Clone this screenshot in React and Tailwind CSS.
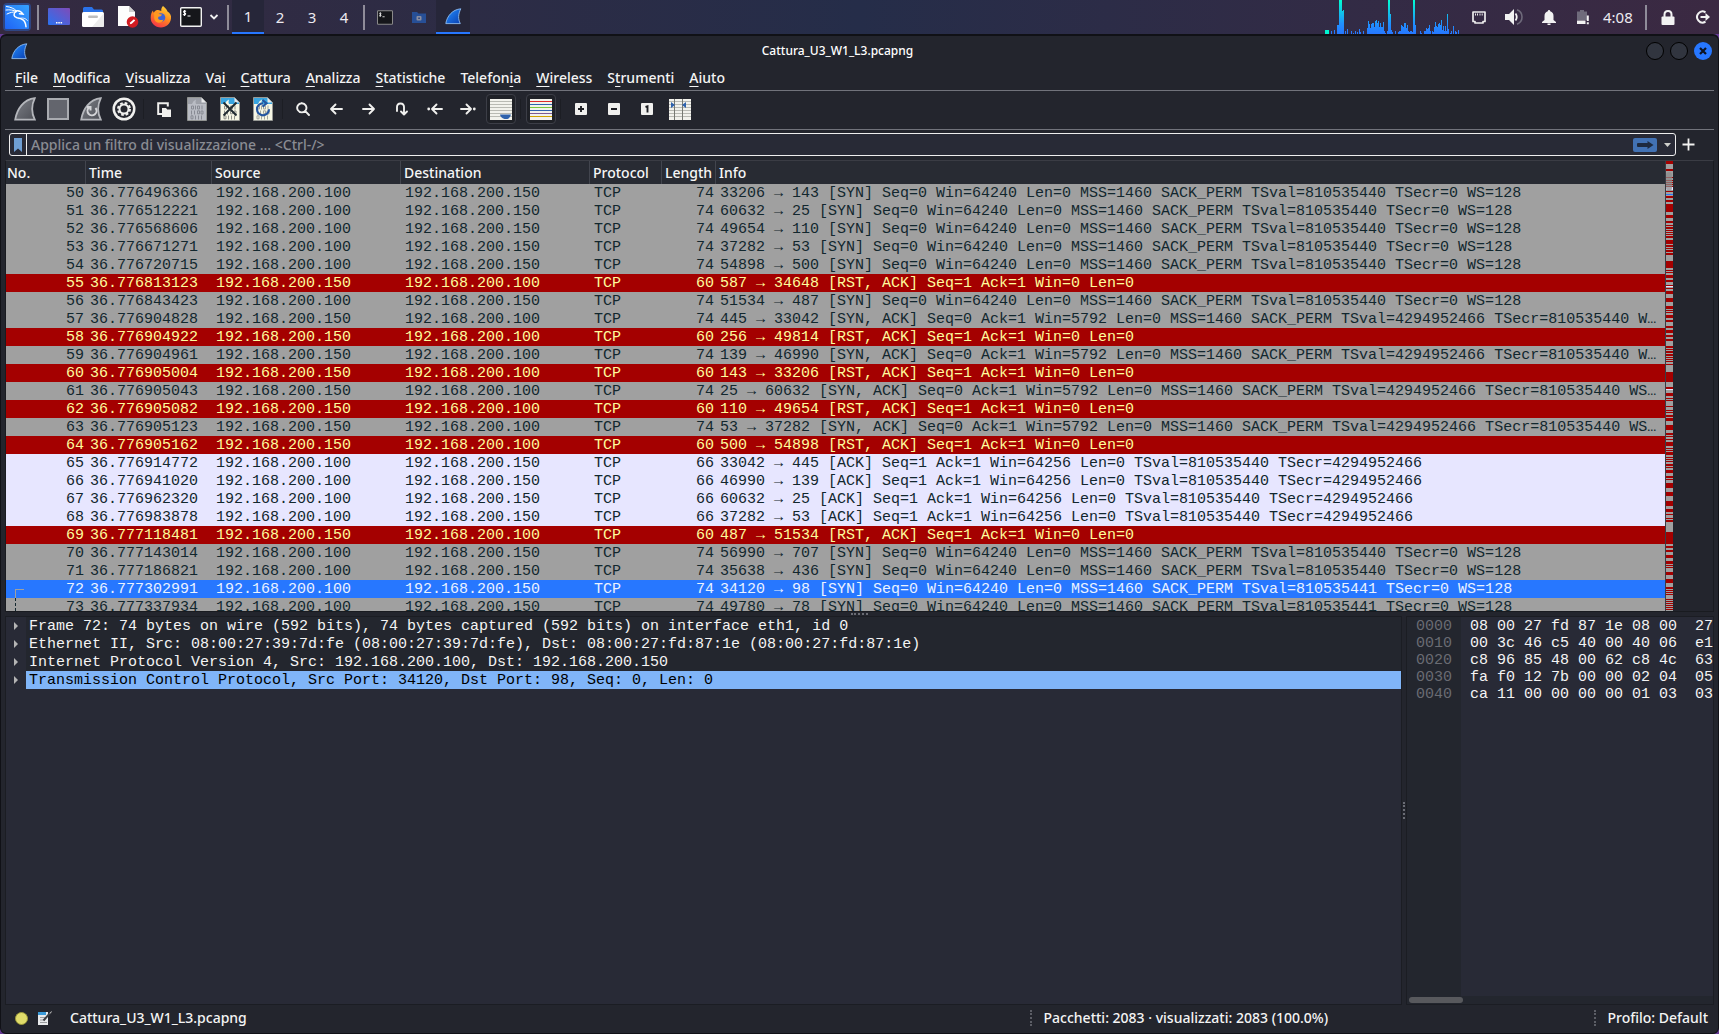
import React from "react";

const S = "192.168.200.100";
const D = "192.168.200.150";
const syn = (p, t = "810535440") => `${p} [SYN] Seq=0 Win=64240 Len=0 MSS=1460 SACK_PERM TSval=${t} TSecr=0 WS=128`;
const rst = (p) => `${p} [RST, ACK] Seq=1 Ack=1 Win=0 Len=0`;
const synAck = (p, end) => `${p} [SYN, ACK] Seq=0 Ack=1 Win=5792 Len=0 MSS=1460 SACK_PERM TSval=4294952466 TSecr=810535440 ${end}`;
const ack = (p) => `${p} [ACK] Seq=1 Ack=1 Win=64256 Len=0 TSval=810535440 TSecr=4294952466`;

const packets = [
  [50, "36.776496366", "gray", 74, syn("33206 → 143")],
  [51, "36.776512221", "gray", 74, syn("60632 → 25")],
  [52, "36.776568606", "gray", 74, syn("49654 → 110")],
  [53, "36.776671271", "gray", 74, syn("37282 → 53")],
  [54, "36.776720715", "gray", 74, syn("54898 → 500")],
  [55, "36.776813123", "red", 60, rst("587 → 34648")],
  [56, "36.776843423", "gray", 74, syn("51534 → 487")],
  [57, "36.776904828", "back", 74, synAck("445 → 33042", "W…")],
  [58, "36.776904922", "red", 60, rst("256 → 49814")],
  [59, "36.776904961", "back", 74, synAck("139 → 46990", "W…")],
  [60, "36.776905004", "red", 60, rst("143 → 33206")],
  [61, "36.776905043", "back", 74, synAck("25 → 60632", "WS…")],
  [62, "36.776905082", "red", 60, rst("110 → 49654")],
  [63, "36.776905123", "back", 74, synAck("53 → 37282", "WS…")],
  [64, "36.776905162", "red", 60, rst("500 → 54898")],
  [65, "36.776914772", "ack", 66, ack("33042 → 445")],
  [66, "36.776941020", "ack", 66, ack("46990 → 139")],
  [67, "36.776962320", "ack", 66, ack("60632 → 25")],
  [68, "36.776983878", "ack", 66, ack("37282 → 53")],
  [69, "36.777118481", "red", 60, rst("487 → 51534")],
  [70, "36.777143014", "gray", 74, syn("56990 → 707")],
  [71, "36.777186821", "gray", 74, syn("35638 → 436")],
  [72, "36.777302991", "sel", 74, syn("34120 → 98", "810535441")],
  [73, "36.777337934", "gray", 74, syn("49780 → 78", "810535441")],
];

const tones = {
  gray: "bg-[#a0a0a0] text-[#12272e]",
  back: "bg-[#a0a0a0] text-[#12272e]",
  red: "bg-[#a40000] text-[#fffc9c]",
  ack: "bg-[#e7e6ff] text-[#12272e]",
  sel: "bg-[#2777ff] text-[#eaf2ff]",
};

const reversed = new Set(["back", "red"]);

const minimapRed = [
  [0, 3], [8, 2], [16, 1], [19, 1], [21, 1], [23, 1], [25, 2], [30, 1], [35, 2], [39, 2], [43, 8], [54, 3], [60, 2], [64, 1], [66, 2], [69, 1],
  [71, 1], [73, 1], [75, 2], [79, 4], [84, 2], [87, 1], [89, 2], [92, 2], [100, 7], [109, 1], [111, 1], [114, 3], [119, 2], [124, 2], [127, 1],
  [130, 3], [137, 4], [145, 3], [149, 1], [151, 1], [154, 3], [159, 2], [165, 2], [169, 3], [174, 2], [178, 2], [185, 2], [188, 1], [190, 2],
  [193, 2], [196, 1], [198, 1], [200, 1], [203, 1], [211, 10], [226, 2], [232, 3], [237, 1], [239, 1], [245, 1], [249, 1], [251, 1], [254, 2],
  [257, 3], [264, 5], [272, 2], [275, 1], [278, 1], [281, 4], [287, 1], [289, 1], [291, 3], [296, 1], [298, 1], [300, 1], [303, 2], [306, 1],
  [309, 3], [315, 2], [318, 1], [322, 5], [331, 4], [340, 5], [348, 3], [353, 1], [357, 1], [359, 2], [371, 12], [385, 2], [389, 2], [394, 3],
  [400, 3], [404, 1], [406, 1], [411, 3], [418, 4], [426, 2], [429, 1], [431, 1], [433, 1], [438, 1], [440, 1], [442, 1], [444, 1], [446, 1], [448, 1],
];

const cpuBars = [
  [6, 3], [9, 4], [12, 9], [13, 9], [14, 34], [15, 34], [16, 34], [17, 23], [18, 24], [20, 3], [22, 5], [26, 3], [28, 1], [30, 3], [32, 2],
  [34, 5], [35, 2], [38, 3], [42, 6], [43, 13], [44, 10], [45, 6], [46, 10], [47, 11], [48, 11], [49, 7], [50, 13], [51, 14], [52, 11], [53, 13],
  [54, 7], [55, 11], [56, 7], [57, 7], [58, 12], [59, 3], [60, 1], [62, 3], [63, 34], [64, 34], [65, 20], [66, 4], [67, 2], [70, 3], [73, 2],
  [74, 3], [75, 3], [76, 9], [77, 8], [78, 7], [79, 11], [80, 11], [81, 6], [82, 9], [83, 3], [84, 2], [85, 3], [86, 3], [87, 2], [88, 34],
  [89, 34], [90, 9], [95, 3], [96, 1], [99, 3], [100, 3], [101, 6], [102, 5], [103, 6], [104, 9], [105, 3], [107, 3], [108, 2], [109, 7],
  [110, 12], [111, 8], [112, 7], [113, 10], [114, 11], [115, 9], [116, 14], [117, 4], [118, 8], [119, 3], [120, 8], [121, 3], [122, 20],
  [123, 5], [125, 1], [126, 3], [128, 8], [130, 3], [131, 2], [133, 4],
];

const menus = [
  ["", "F", "ile"], ["", "M", "odifica"], ["", "V", "isualizza"], ["Va", "i", ""], ["", "C", "attura"], ["", "A", "nalizza"],
  ["", "S", "tatistiche"], ["Telefon", "i", "a"], ["", "W", "ireless"], ["S", "t", "rumenti"], ["", "A", "iuto"],
];

const tree = [
  "Frame 72: 74 bytes on wire (592 bits), 74 bytes captured (592 bits) on interface eth1, id 0",
  "Ethernet II, Src: 08:00:27:39:7d:fe (08:00:27:39:7d:fe), Dst: 08:00:27:fd:87:1e (08:00:27:fd:87:1e)",
  "Internet Protocol Version 4, Src: 192.168.200.100, Dst: 192.168.200.150",
  "Transmission Control Protocol, Src Port: 34120, Dst Port: 98, Seq: 0, Len: 0",
];

const hex = [
  ["0000", "08 00 27 fd 87 1e 08 00  27"],
  ["0010", "00 3c 46 c5 40 00 40 06  e1"],
  ["0020", "c8 96 85 48 00 62 c8 4c  63"],
  ["0030", "fa f0 12 7b 00 00 02 04  05"],
  ["0040", "ca 11 00 00 00 00 01 03  03"],
];

const Svg = ({ w, h, children }) => (
  <svg width={w} height={h} viewBox={`0 0 ${w} ${h}`} className="block shrink-0" aria-hidden="true">{children}</svg>
);

/* ---------- desktop panel ---------- */

const KaliIcon = () => (
  <Svg w={28} h={28}>
    <defs>
      <linearGradient id="kali" x1="0" y1="1" x2="1" y2="0"><stop offset="0" stopColor="#1f63f5" /><stop offset="1" stopColor="#35a2ff" /></linearGradient>
    </defs>
    <rect x="0" y="0" width="28" height="28" rx="4" fill="#2777ff" opacity="0.35" />
    <rect x="2" y="2" width="24" height="24" rx="1" fill="url(#kali)" />
    <g fill="none" stroke="#fff" strokeLinecap="round">
      <path d="M3.500 3.500c4 .5 8 2 10 4.500M3 7c4-.5 7.500 0 10.500 1.500M4 11c3-1.500 6-2.300 9-2" strokeWidth="1" />
      <path d="M12.500 8c3-.8 6 .8 7.500 3.200l-3.500-.4" strokeWidth="1.500" />
      <path d="M13 8.500c-3 2-2.500 5.500 1 6.300 4.500.8 8.500 1.700 9 9" strokeWidth="1.500" />
      <path d="M16 15.500c3.500-1 6.500-.5 8.500 2" strokeWidth="0.800" />
    </g>
  </Svg>
);

const DesktopIcon = () => (
  <Svg w={22} h={18}>
    <defs><linearGradient id="desk" x1="0" y1="1" x2="1" y2="0"><stop offset="0" stopColor="#2a72f0" /><stop offset="1" stopColor="#7f4bb8" /></linearGradient></defs>
    <rect width="22" height="17" rx="1" fill="url(#desk)" />
    <path d="M8 14h1.500v1.500H8zM10.300 14h1.500v1.500h-1.500zM12.600 14h1.500v1.500h-1.500z" fill="#fff" />
  </Svg>
);

const FolderIcon = () => (
  <Svg w={22} h={20}>
    <path d="M1 8V1.500Q1 0 2.500 0H10l2 2.500h7.500Q21 2.500 21 4v4z" fill="#2a72e8" />
    <path d="M0 6.500Q0 5 1.500 5h19Q22 5 22 6.500v12q0 1.500-1.500 1.500h-19Q0 20 0 18.500z" fill="#fff" />
    <path d="M22 6v12.500q0 1.500-1.500 1.500H10z" fill="#ececec" />
    <rect x="6" y="8.500" width="10" height="2.500" rx="1.200" fill="#bdbdbd" />
  </Svg>
);

const DocIcon = () => (
  <Svg w={22} h={22}>
    <path d="M1 0h11l6 6v14H1z" fill="#fdfdfd" />
    <path d="M12 0l6 6h-6z" fill="#cfcfcf" />
    <circle cx="15.500" cy="16" r="5.800" fill="#d21c22" />
    <path d="M12.800 18.300l.6-2 3.500-3 1.300 1.300-3.400 3.200z" fill="#fff" />
  </Svg>
);

const FirefoxIcon = () => (
  <Svg w={22} h={22}>
    <defs><linearGradient id="fx" x1="0.800" y1="0" x2="0.300" y2="1"><stop offset="0" stopColor="#ffd83a" /><stop offset="0.500" stopColor="#ff8a1e" /><stop offset="1" stopColor="#f5334a" /></linearGradient></defs>
    <path d="M13 0c2 1.500 3.500 3 4.500 5.500C20 7 21.500 9.500 21 12.500 20.300 18 16 21.500 11 21.500 5 21.500.500 17 .700 11.500.800 8.500 1.500 6 3 4.500c0 1 .3 1.800.8 2.200C5 4.500 6.500 4 8 4c1.500.2 2.500.5 3.300 1C11 3 11.700 1.200 13 0z" fill="url(#fx)" />
    <circle cx="11" cy="11.500" r="4.300" fill="#3b63d8" />
    <path d="M3.800 6.700c2-.4 3.700 0 5.200 1.300l3 .5c-.5 1.800-2 2-3.500 2.300-1.500 2.700 2 4.200 5 2.700-2 5-8.500 3.500-9.200-.5-.4-2.300.3-4-.5-6.300z" fill="#ff9a20" />
  </Svg>
);

const TerminalIcon = ({ w = 22, h = 20, dim }) => (
  <svg width={w} height={h} viewBox="0 0 22 20" className="block" aria-hidden="true">
    <rect x="0.700" y="0.700" width="20.600" height="18.600" rx="1" fill="#15161a" stroke={dim ? "#8a8a8a" : "#f2f2f2"} strokeWidth="1.400" />
    <path d="M6 4.500q-1-.9-2-.4-.9.800.2 1.500l.8.400q1.200.8.200 1.700-1.200.6-2.200-.4M4.500 3v6M7.500 9h3" stroke="#fff" strokeWidth="1.100" fill="none" />
  </svg>
);

const Fin = ({ w = 17, h = 17 }) => (
  <svg width={w} height={h} viewBox="0 0 17 17" className="block" aria-hidden="true">
    <defs><linearGradient id="fin" x1="0" y1="0" x2="1" y2="1"><stop offset="0.200" stopColor="#1f7ff0" /><stop offset="1" stopColor="#0a3fb0" /></linearGradient></defs>
    <path d="M.800 15.600C2 8 7.500 1.500 15.800.800 13 6.500 13 11 15.300 15.600z" fill="url(#fin)" stroke="#8fbcf0" strokeWidth="0.900" />
  </svg>
);

const PanelSep = () => <span className="h-[25px] w-0.5 shrink-0 bg-[#8f8c99]" />;

const PanelButton = ({ label, className, children }) => (
  <button type="button" aria-label={label} className={`flex h-[34px] shrink-0 items-center justify-center ${className}`}>{children}</button>
);

function DesktopPanel() {
  return (
    <header className="flex h-[34px] shrink-0 items-center bg-linear-to-r from-[#342a40] via-[#252d49] to-[#3b2942] text-[15px] text-[#eceaf0]">
      <PanelButton label="Applications" className="w-[34px]"><KaliIcon /></PanelButton>
      <span className="w-[3px]" />
      <PanelSep />
      <span className="w-[3px]" />
      <PanelButton label="Desktop" className="w-[34px]"><DesktopIcon /></PanelButton>
      <PanelButton label="Files" className="w-[34px]"><FolderIcon /></PanelButton>
      <PanelButton label="Text editor" className="w-[36px]"><DocIcon /></PanelButton>
      <PanelButton label="Firefox" className="w-[30px]"><FirefoxIcon /></PanelButton>
      <PanelButton label="Terminal" className="w-[30px]"><TerminalIcon /></PanelButton>
      <PanelButton label="More terminals" className="w-[16px]">
        <Svg w={10} h={6}><path d="M1.500 1l3.500 3.500L8.500 1" fill="none" stroke="#f0f0f0" strokeWidth="1.800" /></Svg>
      </PanelButton>
      <span className="w-[5px]" />
      <PanelSep />
      <nav className="ml-[3px] mr-[3px] flex" aria-label="Workspaces">
        <PanelButton label="Workspace 1" className="w-8 border-b-2 border-[#2777ff] bg-[#262639]">1</PanelButton>
        <PanelButton label="Workspace 2" className="w-8">2</PanelButton>
        <PanelButton label="Workspace 3" className="w-8">3</PanelButton>
        <PanelButton label="Workspace 4" className="w-8">4</PanelButton>
      </nav>
      <PanelSep />
      <span className="w-[3px]" />
      <PanelButton label="Terminal window" className="w-[34px]"><TerminalIcon w={16} h={15} dim /></PanelButton>
      <PanelButton label="File manager window" className="w-[34px]">
        <Svg w={14} h={11}>
          <path d="M0 0h5l1.500 1.500H14V11H0z" fill="#274f96" /><rect x="4.500" y="4" width="5" height="4.500" rx="1" fill="#8b8ea0" /><rect x="6.300" y="5.500" width="1.500" height="1.500" fill="#27407a" />
        </Svg>
      </PanelButton>
      <PanelButton label="Wireshark window" className="w-[34px] border-b-2 border-[#2777ff] bg-[#262639]"><Fin /></PanelButton>

      <div className="ml-auto flex items-center">
        <svg width="134" height="34" viewBox="0 0 134 34" className="mr-0.5 block" role="img" aria-label="CPU usage">
          <defs><linearGradient id="cpu" gradientUnits="userSpaceOnUse" x1="0" y1="0" x2="0" y2="34"><stop offset="0" stopColor="#00ffd0" /><stop offset="0.700" stopColor="#2090ff" /><stop offset="1" stopColor="#2777ff" /></linearGradient></defs>
          <rect x="0" y="30" width="4" height="4" fill="#00f5d0" />
          {cpuBars.map(([x, h]) => <rect key={x} x={x} y={34 - h} width="1" height={h} fill="url(#cpu)" />)}
        </svg>
        <PanelButton label="Network" className="w-[35px]">
          <Svg w={14} h={13}><path d="M1 1h12v9.500h-2V12H3v-1.500H1z" fill="none" stroke="#ececec" strokeWidth="1.700" strokeLinejoin="round" /><path d="M3.500 2.500v2M5.500 2.500v2M8 2.500v2M10.200 2.500v2" stroke="#ececec" strokeWidth="1" /></Svg>
        </PanelButton>
        <PanelButton label="Volume" className="w-[35px]">
          <Svg w={18} h={16}><path d="M0 5h4l5-5v16l-5-5H0z" fill="#f2f2f2" /><path d="M10.500 4.500q2.500 3.500 0 7" fill="none" stroke="#f2f2f2" strokeWidth="1.800" /><path d="M12 .800q5 2 5 7.200t-5 7.200" fill="none" stroke="#6e6a7a" strokeWidth="1.600" /></Svg>
        </PanelButton>
        <PanelButton label="Notifications" className="w-[35px]">
          <Svg w={14} h={15}><path d="M7 0q1.200 0 1.200 1.300Q11.500 2.500 11.500 6v4L14 12v1H0v-1l2.500-2V6q0-3.500 3.300-4.700Q5.800 0 7 0zM5.500 13.500h3V15h-3z" fill="#f2f2f2" /></Svg>
        </PanelButton>
        <PanelButton label="Battery" className="w-[34px]">
          <Svg w={12} h={15}><path d="M0 1.500h3V0h4v1.500h3V10H0z" fill="#6f6b7b" /><path d="M0 10.500h8.500V14H0z" fill="#f2f2f2" /><path d="M9.800 5.500h2v5.500h-2zM9.800 12.200h2v2h-2z" fill="#f2f2f2" /></Svg>
        </PanelButton>
        <time className="w-[45px] pl-[3px]">4:08</time>
        <PanelSep />
        <span className="w-1" />
        <PanelButton label="Lock screen" className="w-[34px]">
          <Svg w={14} h={15}><path d="M3.500 7V4.500Q3.500 1 7 1t3.500 3.500V7" fill="none" stroke="#f2f2f2" strokeWidth="2" /><rect x="0.500" y="6.500" width="13" height="8.500" rx="1" fill="#f2f2f2" /></Svg>
        </PanelButton>
        <PanelButton label="Log out" className="w-[34px]">
          <Svg w={15} h={14}><path d="M10.500 2.300A5.500 5.500 0 1 0 10.500 11.700" fill="none" stroke="#f2f2f2" strokeWidth="2" /><path d="M5.500 6h5V3l4.500 4-4.500 4V8h-5z" fill="#f2f2f2" /></Svg>
        </PanelButton>
      </div>
    </header>
  );
}

/* ---------- toolbar ---------- */

const GrayFin = ({ children }) => (
  <Svg w={22} h={24}>
    <defs><linearGradient id="gf" x1="0" y1="0" x2="1" y2="1"><stop offset="0" stopColor="#7d8087" /><stop offset="1" stopColor="#4d4f56" /></linearGradient></defs>
    <path d="M1.200 22.600C3 12 9.500 2.500 20.800 1.200 17 9 17.500 16 20.800 22.600z" fill="url(#gf)" stroke="#b4b6bb" strokeWidth="1.800" />
    {children}
  </Svg>
);

const Page = ({ paper, top, ink, children }) => (
  <Svg w={20} h={24}>
    <path d="M.500.500h14l5 5v18H.500z" fill={paper} stroke="#9a9c98" strokeWidth="0.800" />
    <path d="M1 1h13.500L19 5.500V7H1z" fill={top} />
    <path d="M14.500 .800V5.500H19z" fill="#e9eaec" />
    <path d="M5 7Q6 3.500 9 2.500 8 5 9 7z" fill={paper} />
    <g fill="none" stroke={ink} strokeWidth="1">
      <path d="M4.500 9h2v3h-2zM10.500 9h2v3h-2zM8.500 8.500v4M15 8.500v4M10.500 13.800h2v3h-2zM4.500 13.500v4M7.500 13.500v4M14 14h2v3h-2zM4 18.800h2v3H4zM8.500 18.500v4M11.500 18.500v4M14.500 18.500v4" />
    </g>
    {children}
  </Svg>
);

const Stroke = ({ d, dots, w = 16, h = 14 }) => (
  <Svg w={w} h={h}>
    <path d={d} fill="none" stroke="#f0f0ee" strokeWidth="1.900" strokeLinecap="round" strokeLinejoin="round" />
    {dots}
  </Svg>
);

const Boxed = ({ d }) => (
  <Svg w={12} h={12}><rect width="12" height="12" rx="1" fill="#f0f0ee" /><path d={d} fill="none" stroke="#1c1d22" strokeWidth="1.900" /></Svg>
);

const Lines = ({ colors, children }) => (
  <Svg w={22} h={21}>
    <rect width="22" height="21" fill="#f2f2ec" />
    {colors.map((c, i) => <rect key={i} x="0" y={2 + i * 3} width="22" height="1" fill={c} />)}
    {children}
  </Svg>
);

const dull = ["#b9bab3", "#b9bab3", "#b9bab3", "#b9bab3", "#b9bab3", "#b9bab3"];

const tools = [
  [
    ["Avvia cattura", <GrayFin />],
    ["Ferma cattura", <Svg w={22} h={22}><rect x="1" y="1" width="20" height="20" fill="#63656d" stroke="#a9abb0" strokeWidth="2" /></Svg>],
    ["Riavvia cattura", <GrayFin><path d="M9 10.500a4.500 4.500 0 1 0 6.500.5M7 10h3.500v3.500" fill="none" stroke="#d4d5d8" strokeWidth="2" /></GrayFin>],
    ["Opzioni di cattura", (
      <Svg w={24} h={24}>
        <circle cx="12" cy="12" r="11.500" fill="#f0f0ee" /><circle cx="12" cy="12" r="9" fill="#25272f" />
        <circle cx="12" cy="12" r="6" fill="none" stroke="#f0f0ee" strokeWidth="2" strokeDasharray="2.700 2.010" />
        <circle cx="12" cy="12" r="4.500" fill="none" stroke="#f0f0ee" strokeWidth="2" />
      </Svg>
    )],
  ],
  [
    ["Apri", <Svg w={14} h={15}><path d="M5 12H1.200V1.200h9.600V4.500" fill="none" stroke="#f0f0ee" strokeWidth="2" /><path d="M5 6h4l1.200 1.500H14V15H5z" fill="#f0f0ee" /></Svg>],
    ["Salva", <Page paper="#b9bcc4" top="#9da0a8" ink="#888b94" />],
    ["Chiudi", <Page paper="#f6f6e4" top="#39a5e0" ink="#8f918a"><path d="M3.500 5.500l13 13M16.500 5.500l-13 13" stroke="#1f2a30" strokeWidth="1.900" /></Page>],
    ["Ricarica", <Page paper="#f6f6e4" top="#39a5e0" ink="#a5a79e"><path d="M10 6.300a6 6 0 1 0 6 6M9.500 3l4 3.300-4 3.400" fill="none" stroke="#2456a0" strokeWidth="2.200" /></Page>],
  ],
  [
    ["Trova", <Stroke d="M5.800 1.200a4.600 4.600 0 1 0 .01 0M9.300 9.200L13 13" w={14} h={14} />],
    ["Indietro", <Stroke d="M6.500 2.500L2 7l4.500 4.500M2 7h11" w={14} h={14} />],
    ["Avanti", <Stroke d="M7.500 2.500L12 7l-4.500 4.500M12 7H1" w={14} h={14} />],
    ["Vai al pacchetto", <Stroke d="M2 9V5Q2 1.500 5.500 1.500T9 5v7M6 9.500L9 12.500l3-3" w={14} h={14} />],
    ["Primo pacchetto", <Stroke d="M9.500 2.500L5 7l4.500 4.500M5 7h10" dots={<circle cx="1.700" cy="7" r="1.400" fill="#f0f0ee" />} />],
    ["Ultimo pacchetto", <Stroke d="M6.500 2.500L11 7l-4.500 4.500M11 7H1" dots={<circle cx="14.300" cy="7" r="1.400" fill="#f0f0ee" />} />],
    ["Scorrimento automatico", <Lines colors={dull}><path d="M10 15.500h11q-.5 3-3.500 4.500h-3q-4-1.500-4.500-4.500z" fill="#2f62ac" /></Lines>, true],
  ],
  [["Colora pacchetti", <Lines colors={["#e02b2b", "#2f62ac", "#7cc53a", "#2f62ac", "#7b5a92", "#d0a400"]} />, true]],
  [
    ["Ingrandisci", <Boxed d="M6 3v6M3 6h6" />],
    ["Riduci", <Boxed d="M3 6h6" />],
    ["Dimensione normale", <Boxed d="M4.500 4l2-.7V9.500" />],
    ["Ridimensiona colonne", <Lines colors={dull}><path d="M5.500 0v21M13.500 0v21" stroke="#777972" strokeWidth="1" /><path d="M2 3l4 3-4 3zM17 3l-4 3 4 3z" fill="#2f62ac" /></Lines>],
  ],
];

function Toolbar() {
  return (
    <div role="toolbar" className="mx-1 flex h-[39px] items-center border-b border-[#71737b] pb-0.5 pl-[3px]">
      {tools.map((group, g) => (
        <React.Fragment key={g}>
          {g > 0 && <span className="mx-[3px] h-5 w-px bg-[#1c1e24]" />}
          {group.map(([label, icon, on]) => (
            <div key={label} className="flex w-[33px] justify-center">
              <button
                type="button"
                aria-label={label}
                className={on ? "flex size-[30px] items-center justify-center rounded border border-[#3c3e47] bg-[#1f2127]" : "flex size-[30px] items-center justify-center"}
              >
                {icon}
              </button>
            </div>
          ))}
        </React.Fragment>
      ))}
    </div>
  );
}

/* ---------- window ---------- */

function TitleBar() {
  return (
    <div className="grid h-[30px] shrink-0 grid-cols-[1fr_auto_1fr] items-center px-2.5">
      <Fin />
      <h1 className="pr-11 text-[12px] font-medium text-white">Cattura_U3_W1_L3.pcapng</h1>
      <div className="-mr-1 flex justify-end gap-1.5">
        <button type="button" aria-label="Riduci a icona" className="size-[18px] rounded-full border border-black bg-[#31353f]" />
        <button type="button" aria-label="Massimizza" className="size-[18px] rounded-full border border-black bg-[#31353f]" />
        <button type="button" aria-label="Chiudi finestra" className="flex size-[18px] items-center justify-center rounded-full bg-[#2777ff]">
          <Svg w={8} h={8}><path d="M1 1l6 6M7 1L1 7" stroke="#0d1220" strokeWidth="2.200" /></Svg>
        </button>
      </div>
    </div>
  );
}

function MenuBar() {
  return (
    <nav className="mx-1 flex h-[25px] items-center gap-[15px] border-b border-[#71737b] pl-2.5">
      {menus.map(([a, k, b]) => (
        <button key={a + k + b} type="button" className="text-[14px] leading-5 font-medium text-[#f4f4f4]">
          {a}<span className="underline decoration-1 underline-offset-[3px]">{k}</span>{b}
        </button>
      ))}
    </nav>
  );
}

function FilterBar() {
  return (
    <div className="mt-[3px] flex h-[23px] items-center pl-2">
      <div className="flex h-full flex-1 items-center rounded-[3px] border border-[#eeeeee] bg-[#282a36]">
        <button type="button" aria-label="Segnalibri" className="flex h-full w-[17px] shrink-0 items-center justify-center border-r border-[#eeeeee]">
          <Svg w={8} h={14}><path d="M0 0h8v14l-4-3.500L0 14z" fill="#6f9fd4" /></Svg>
        </button>
        <input
          type="text"
          aria-label="Filtro di visualizzazione"
          placeholder="Applica un filtro di visualizzazione … <Ctrl-/>"
          className="h-full min-w-0 flex-1 bg-transparent pl-1 text-[14px] font-medium text-white outline-none placeholder:text-[#8a8c93]"
        />
        <button type="button" aria-label="Applica filtro" className="flex h-3.5 w-6 items-center justify-center rounded-xs bg-[#4272b4]">
          <Svg w={17} h={8}><path d="M1 2h9.500V0L16.500 4l-6 4V6H1Q0 6 0 5V3Q0 2 1 2z" fill="#1e2a3e" /></Svg>
        </button>
        <button type="button" aria-label="Filtri recenti" className="flex h-full w-[18px] items-center justify-end pr-1">
          <Svg w={7} h={4}><path d="M0 0h7L3.500 4z" fill="#d0d0cc" /></Svg>
        </button>
      </div>
      <button type="button" aria-label="Aggiungi pulsante filtro" className="ml-1.5 mr-[23px] flex">
        <Svg w={13} h={13}><path d="M6.500 0.500v12M.500 6.500h12" stroke="#f2f2f0" strokeWidth="1.800" /></Svg>
      </button>
    </div>
  );
}

const Head = ({ children }) => (
  <th scope="col" className="h-[23px] border-r border-[#42454e] p-0 pl-[3px] text-left align-middle font-['Noto_Sans',sans-serif] text-[14px] leading-5 font-medium text-[#f6f6f6] first:pl-px last:border-r-0">
    {children}
  </th>
);

function PacketList() {
  return (
    <section aria-label="Pacchetti" className="mx-1 mt-1 flex h-[452px] border border-[#191b20] border-t-[#3a3c44]">
      <div className="min-w-0 flex-1 overflow-hidden bg-[#282a36]">
        <table className="w-full table-fixed border-separate border-spacing-0 font-['Liberation_Mono',monospace] text-[15px] leading-[17px]">
          <colgroup>
            <col className="w-[80px]" /><col className="w-[126px]" /><col className="w-[189px]" /><col className="w-[189px]" />
            <col className="w-[72px]" /><col className="w-[54px]" /><col />
          </colgroup>
          <thead>
            <tr className="bg-[#282b33]">
              <Head>No.</Head><Head>Time</Head><Head>Source</Head><Head>Destination</Head><Head>Protocol</Head><Head>Length</Head><Head>Info</Head>
            </tr>
          </thead>
          <tbody>
            {packets.map(([no, time, tone, len, info]) => (
              <tr key={no} className={`h-[18px] whitespace-pre ${tones[tone]}`}>
                <td className="relative p-0 pt-px pr-0.5 text-right">
                  {no === 72 && <span className="absolute top-[9px] left-[9px] h-[9px] w-[9px] border-t border-l border-[#a0a0a0]" />}
                  {no === 73 && <span className="absolute top-0 left-[9px] h-[18px] border-l border-dashed border-[#12272e]" />}
                  {no}
                </td>
                <td className="p-0 pt-px pl-1">{time}</td>
                <td className="p-0 pt-px pl-1">{reversed.has(tone) ? D : S}</td>
                <td className="p-0 pt-px pl-1">{reversed.has(tone) ? S : D}</td>
                <td className="p-0 pt-px pl-1">TCP</td>
                <td className="p-0 pt-px pr-0.5 text-right">{len}</td>
                <td className="overflow-hidden p-0 pt-px pl-1">{info}</td>
              </tr>
            ))}
          </tbody>
        </table>
      </div>
      <div className="relative w-2 shrink-0 border-l border-[#3a3c44] bg-[#a0a0a0]">
        <svg width="7" height="450" viewBox="0 0 7 450" preserveAspectRatio="none" className="block" aria-hidden="true">
          {minimapRed.map(([y, h]) => <rect key={y} x="0" y={y} width="7" height={h} fill="#a40000" />)}
          <rect x="0" y="26" width="7" height="3" fill="#e7e6ff" />
          <rect x="0" y="33" width="7" height="1" fill="#2777ff" />
          <rect x="0" y="125" width="7" height="1" fill="#e7e6ff" />
          <rect x="0" y="228" width="7" height="1" fill="#e7e6ff" />
          <rect x="0" y="11" width="6" height="19" rx="3" fill="#8b8b8b" opacity="0.700" />
        </svg>
      </div>
      <div className="w-10 shrink-0" />
    </section>
  );
}

function Details() {
  return (
    <section aria-label="Dettagli pacchetto" className="min-w-0 flex-1 border border-[#1b1d23] bg-[#282a36]">
      <ul className="font-['Liberation_Mono',monospace] text-[15px] leading-[17px] text-[#f4f4f4]">
        {tree.map((t, i) => (
          <li key={t} className="flex items-center">
            <button type="button" aria-label="Espandi" className="flex w-5 shrink-0 justify-center">
              <Svg w={4} h={8}><path d="M0 0l4 4-4 4z" fill="#b4b4b4" /></Svg>
            </button>
            <span className={i === 3 ? "flex-1 overflow-hidden bg-[#80b5f8] pt-px pl-[3px] whitespace-pre text-black" : "flex-1 overflow-hidden bg-[#23262e] pt-px pl-[3px] whitespace-pre"}>{t}</span>
          </li>
        ))}
      </ul>
    </section>
  );
}

function Bytes() {
  return (
    <section aria-label="Byte del pacchetto" className="flex w-[308px] shrink-0 flex-col border border-[#1b1d23] bg-[#282a36] font-['Liberation_Mono',monospace] text-[15px] leading-[17px]">
      <div className="flex flex-1 overflow-hidden">
        <div className="w-[54px] shrink-0 bg-[#23262e] pt-px pl-[9px] text-[#6a6c73]">
          {hex.map(([o]) => <div key={o}>{o}</div>)}
        </div>
        <div className="pt-px pl-[9px] whitespace-pre text-[#f4f4f4]">
          {hex.map(([o, b]) => <div key={o}>{b}</div>)}
        </div>
      </div>
      <div className="h-2 bg-[#23262e] px-0.5 pt-px"><div className="h-1.5 w-[54px] rounded-full bg-[#58595d]" /></div>
    </section>
  );
}

function StatusBar() {
  return (
    <footer className="flex h-[28px] shrink-0 items-center px-2.5 pb-0.5 pl-3.5 text-[14px] leading-5 font-medium text-[#f4f4f4]">
      <button type="button" aria-label="Informazioni esperto" className="size-[13px] rounded-full border border-[#9c9a3a] bg-[#e0dc6a]" />
      <button type="button" aria-label="Commento cattura" className="ml-2.5">
        <Svg w={14} h={14}>
          <path d="M0 1h10v13H0z" fill="#e8eaec" /><path d="M0 1h8v3H0z" fill="#3a9ad8" />
          <path d="M2 6.500h6M2 9h4M2 11.500h7" stroke="#9a9c9f" /><path d="M13 1L5.500 9.500" stroke="#3a3c40" strokeWidth="2" /><path d="M13.500.500l-1.500 2" stroke="#c8c8c8" />
        </Svg>
      </button>
      <span className="ml-[18px] flex-1">Cattura_U3_W1_L3.pcapng</span>
      <span className="h-4 border-l-2 border-dotted border-[#5c5e66]" />
      <span className="w-[550px] pl-3">Pacchetti: 2083 · visualizzati: 2083 (100.0%)</span>
      <span className="mx-3 h-4 border-l-2 border-dotted border-[#5c5e66]" />
      <button type="button">Profilo: Default</button>
    </footer>
  );
}

export default function App() {
  return (
    <div className="flex min-h-screen flex-col bg-[#653a94] font-['Noto_Sans',sans-serif]">
      <DesktopPanel />
      <main className="flex flex-1 flex-col overflow-hidden rounded-t-md rounded-b-md border-2 border-x-1 border-b-1 border-[#101116] bg-[#23252d]">
        <TitleBar />
        <MenuBar />
        <Toolbar />
        <FilterBar />
        <PacketList />
        <div className="flex h-[4px] items-center justify-center" role="separator">
          <span className="w-[17px] border-t-2 border-dotted border-[#6a6c74]" />
        </div>
        <div className="mx-1 flex flex-1">
          <Details />
          <div className="flex w-[4px] items-center justify-center" role="separator">
            <span className="h-[17px] border-l-2 border-dotted border-[#6a6c74]" />
          </div>
          <Bytes />
        </div>
        <StatusBar />
      </main>
    </div>
  );
}
